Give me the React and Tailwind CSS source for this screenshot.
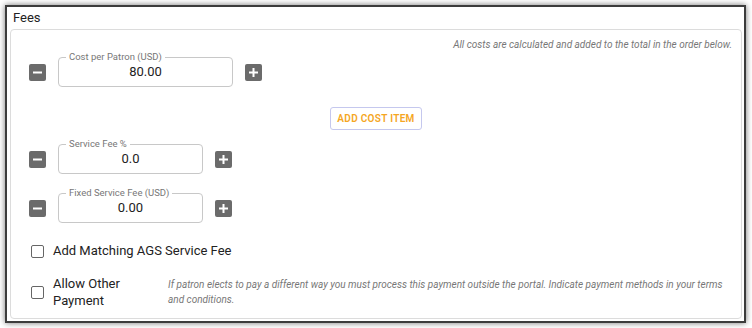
import React from 'react';

const font = { fontFamily: 'Roboto, "Liberation Sans", sans-serif' };

const StepButton = ({ kind }) => (
  <button
    type="button"
    className="w-[17px] h-[17px] bg-[#6b6b6b] rounded-[2px] flex items-center justify-center shrink-0"
  >
    <svg width="11" height="11" viewBox="0 0 11 11">
      <rect x="1" y="4.5" width="9" height="2" fill="#fff" />
      {kind === 'plus' && <rect x="4.5" y="1" width="2" height="9" fill="#fff" />}
    </svg>
  </button>
);

const NumberField = ({ label, value, width }) => (
  <div className="flex items-center gap-3">
    <StepButton kind="minus" />
    <div
      className={`${width} h-[30px] border border-[#c8c8c8] rounded-[4px] relative flex items-center justify-center text-[13px] text-[#222]`}
    >
      <span className="absolute left-[7px] -top-[7px] bg-white px-[3px] text-[9.5px] leading-[12px] text-[#777]">
        {label}
      </span>
      <span>{value}</span>
    </div>
    <StepButton kind="plus" />
  </div>
);

const Checkbox = () => (
  <span className="w-[13px] h-[13px] border-[1.5px] border-[#666] rounded-[2px] shrink-0 bg-white" />
);

export default function App() {
  return (
    <div className="w-[752px] h-[328px] bg-white p-[5px]" style={font}>
      <div className="h-[318px] w-[741px] border-2 border-[#3c3c3c] shadow-[0_0_6px_rgba(0,0,0,0.55)] bg-white flex flex-col">
        <div className="h-[22px] pl-[6px] pt-[3px] text-[13px] leading-[16px] text-[#222]">Fees</div>
        <div className="ml-[3px] mr-[2px] h-[290px] border border-[#dcdcdc] rounded-[4px] pl-[18px] pr-[9px] pt-[8px]">
          <div className="text-right text-[10px] italic text-[#777] leading-[14px]">
            All costs are calculated and added to the total in the order below.
          </div>
          <div className="mt-[5px]">
            <NumberField label="Cost per Patron (USD)" value="80.00" width="w-[175px]" />
          </div>
          <div className="flex justify-center mt-[20px] pr-[9px]">
            <button
              type="button"
              className="h-[23px] px-[6px] border border-[#c5c8ee] rounded-[3px] text-[10px] font-semibold text-[#f5a623] tracking-[0.3px]"
            >
              ADD COST ITEM
            </button>
          </div>
          <div className="mt-[14px]">
            <NumberField label="Service Fee %" value="0.0" width="w-[145px]" />
          </div>
          <div className="mt-[19px]">
            <NumberField label="Fixed Service Fee (USD)" value="0.00" width="w-[145px]" />
          </div>
          <div className="flex items-center mt-[20px] pl-[2px] gap-[9px]">
            <Checkbox />
            <span className="text-[13px] text-[#222] leading-[16px]">Add Matching AGS Service Fee</span>
          </div>
          <div className="flex items-center mt-[16px] pl-[2px]">
            <Checkbox />
            <span className="ml-[9px] w-[100px] text-[13px] text-[#222] leading-[17px]">Allow Other Payment</span>
            <span className="ml-[15px] flex-1 text-[10px] italic text-[#777] leading-[15px]">
              If patron elects to pay a different way you must process this payment outside the portal. Indicate payment methods in your terms and conditions.
            </span>
          </div>
        </div>
      </div>
    </div>
  );
}
